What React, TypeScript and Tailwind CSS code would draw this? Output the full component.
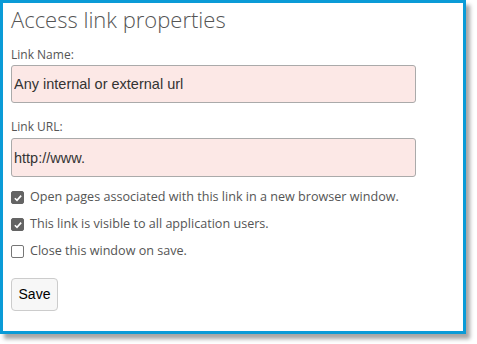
import React, { useState } from "react";

function Check({ checked, onToggle }: { checked: boolean; onToggle: () => void }) {
  return (
    <span
      onClick={onToggle}
      className={`flex h-[13px] w-[13px] shrink-0 items-center justify-center rounded-[2px] border ${checked ? "border-[#646464] bg-[#646464]" : "border-[#767676] bg-white"}`}
    >
      {checked && (
        <svg viewBox="0 0 12 12" className="h-[10px] w-[10px]">
          <path d="M2.2 6.3 L4.8 8.8 L9.8 3.2" fill="none" stroke="white" strokeWidth="2" />
        </svg>
      )}
    </span>
  );
}

export default function App() {
  const [name, setName] = useState("Any internal or external url");
  const [url, setUrl] = useState("http://www.");
  const [opts, setOpts] = useState([true, true, false]);

  const labels = [
    "Open pages associated with this link in a new browser window.",
    "This link is visible to all application users.",
    "Close this window on save.",
  ];

  const toggle = (i: number) => setOpts(opts.map((v, j) => (j === i ? !v : v)));

  return (
    <div className="h-[344px] w-[477px] bg-white">
      <div className="h-[334px] w-[466px] border-[3px] border-[#0a9bd7] bg-white px-[8px] pt-[1px] shadow-[4px_5px_4px_rgba(0,0,0,0.35)] font-['Open_Sans',sans-serif] text-[#555]">
        <h1 className="text-[22px] font-light leading-[30px] text-[#555]">Access link properties</h1>

        <label className="mt-[13px] block text-[12px] leading-[16px]">Link Name:</label>
        <input
          value={name}
          onChange={(e) => setName(e.target.value)}
          className="mt-[2px] block h-[38px] w-[405px] rounded-[3px] border border-[#aaa] bg-[#fce8e6] px-[2px] font-['Liberation_Sans',Arial,sans-serif] text-[14.5px] text-[#333] outline-none"
        />

        <label className="mt-[16px] block text-[12px] leading-[16px]">Link URL:</label>
        <input
          value={url}
          onChange={(e) => setUrl(e.target.value)}
          className="mt-[3px] block h-[39px] w-[405px] rounded-[3px] border border-[#aaa] bg-[#fce8e6] px-[2px] font-['Liberation_Sans',Arial,sans-serif] text-[14.5px] text-[#333] outline-none"
        />

        <div className="mt-[12px] flex flex-col gap-[10px]">
          {labels.map((l, i) => (
            <div key={l} className="flex h-[17px] items-center gap-[6px] text-[12.6px]">
              <Check checked={opts[i]} onToggle={() => toggle(i)} />
              <span>{l}</span>
            </div>
          ))}
        </div>

        <button className="mt-[18px] block h-[33px] w-[47px] rounded-[4px] border border-[#ccc] bg-[#f7f7f7] font-['Liberation_Sans',Arial,sans-serif] text-[14px] text-black">
          Save
        </button>
      </div>
    </div>
  );
}
